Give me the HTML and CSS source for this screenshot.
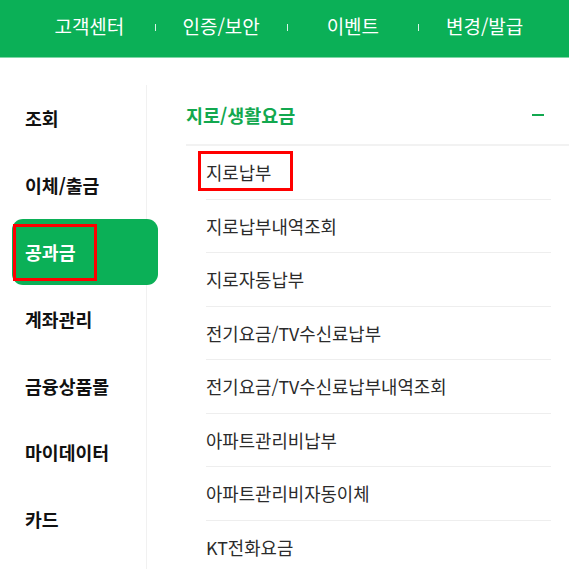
FILE: index.html
```html
<!DOCTYPE html>
<html lang="ko">
<head>
<meta charset="utf-8">
<link rel="stylesheet" href="styles.css">
</head>
<body>
<header class="topbar">
  <a class="top-item">고객센터</a>
  <span class="sep"></span>
  <a class="top-item">인증/보안</a>
  <span class="sep"></span>
  <a class="top-item">이벤트</a>
  <span class="sep"></span>
  <a class="top-item">변경/발급</a>
</header>
<main class="content">
  <nav class="side">
    <div class="side-item">조회</div>
    <div class="side-item">이체/출금</div>
    <div class="side-item active"><span class="mark mark-side"></span>공과금</div>
    <div class="side-item">계좌관리</div>
    <div class="side-item">금융상품몰</div>
    <div class="side-item">마이데이터</div>
    <div class="side-item">카드</div>
  </nav>
  <section class="panel">
    <div class="group-title">
      <span>지로/생활요금</span>
      <span class="minus"></span>
    </div>
    <ul class="sub-list">
      <li class="sub-item"><span class="mark mark-sub"></span>지로납부</li>
      <li class="sub-item">지로납부내역조회</li>
      <li class="sub-item">지로자동납부</li>
      <li class="sub-item">전기요금/TV수신료납부</li>
      <li class="sub-item">전기요금/TV수신료납부내역조회</li>
      <li class="sub-item">아파트관리비납부</li>
      <li class="sub-item">아파트관리비자동이체</li>
      <li class="sub-item">KT전화요금</li>
    </ul>
  </section>
</main>
</body>
</html>
```
FILE: styles.css
```css
* { box-sizing: border-box; }
html, body {
  margin: 0;
  padding: 0;
  background: #fff;
  font-family: "Noto Sans CJK KR", "Noto Sans", sans-serif;
  overflow: hidden;
}
.topbar {
  height: 58px;
  background: #0bb057;
  border-bottom: 1px solid #7fd7a6;
  display: flex;
  align-items: center;
  padding: 0 19px 5px 24px;
}
.top-item {
  flex: 1;
  text-align: center;
  color: #fff;
  font-size: 19px;
  line-height: 26px;
}
.sep {
  width: 1px;
  height: 7px;
  margin-top: 3px;
  background: rgba(255,255,255,0.85);
}
.content {
  display: flex;
  align-items: flex-start;
}
.side {
  width: 147px;
  flex: none;
  margin-top: 27px;
  border-right: 1px solid #f1f1f1;
  min-height: 500px;
}
.side-item {
  position: relative;
  height: 66.8px;
  display: flex;
  align-items: center;
  padding-left: 25px;
  font-size: 18.3px;
  font-weight: 700;
  color: #111;
}
.side-item.active {
  margin-left: 12px;
  width: 146px;
  padding-left: 13px;
  background: #0bb057;
  color: #fff;
  border-radius: 11px;
}
.mark {
  position: absolute;
  border: 3px solid #f00;
}
.mark-side {
  left: 1px;
  top: 5px;
  width: 84px;
  height: 57px;
}
.panel {
  flex: 1;
  padding-top: 27px;
}
.group-title {
  margin-left: 39px;
  height: 61px;
  border-bottom: 2px solid #f2f2f2;
  display: flex;
  align-items: center;
  justify-content: space-between;
  padding-right: 25px;
  color: #12a84f;
  font-size: 18.5px;
  font-weight: 700;
}
.minus {
  width: 12px;
  height: 2px;
  background: #12a84f;
}
.sub-list {
  list-style: none;
  margin: 0 18px 0 59px;
  padding: 0;
}
.sub-item {
  position: relative;
  height: 53.5px;
  border-bottom: 1px solid #eeeeee;
  display: flex;
  align-items: center;
  font-size: 17.8px;
  color: #2b2b2b;
}
.mark-sub {
  left: -8px;
  top: 5px;
  width: 95px;
  height: 40px;
}
```
